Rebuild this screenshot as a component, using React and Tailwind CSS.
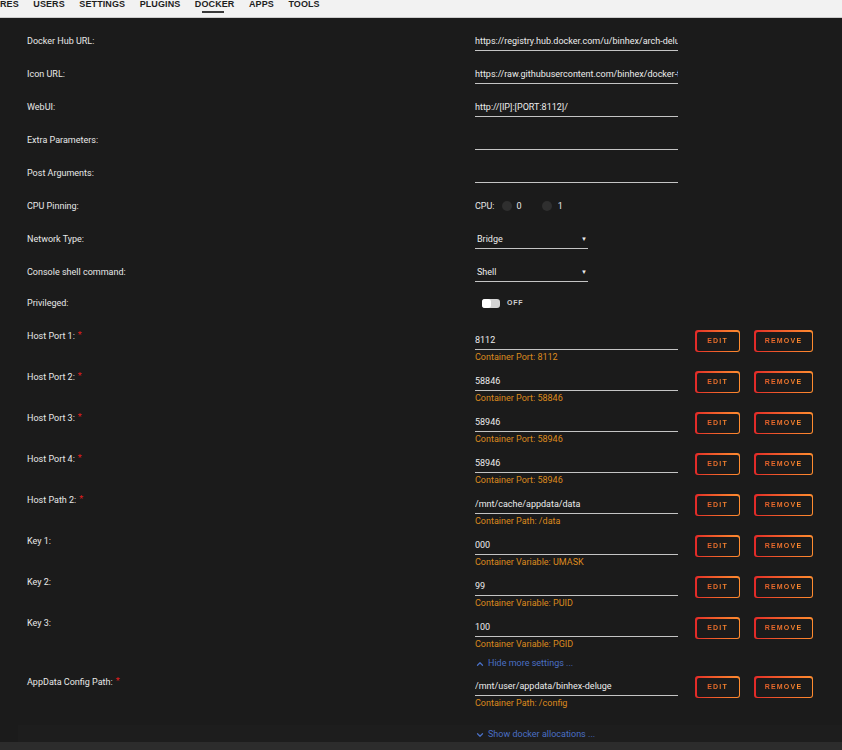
import { ChevronUp, ChevronDown } from 'lucide-react';

const navItems = ['RES', 'USERS', 'SETTINGS', 'PLUGINS', 'DOCKER', 'APPS', 'TOOLS'];

const portRows = [
  { label: 'Host Port 1:', value: '8112', sub: 'Container Port: 8112', req: true },
  { label: 'Host Port 2:', value: '58846', sub: 'Container Port: 58846', req: true },
  { label: 'Host Port 3:', value: '58946', sub: 'Container Port: 58946', req: true },
  { label: 'Host Port 4:', value: '58946', sub: 'Container Port: 58946', req: true },
  { label: 'Host Path 2:', value: '/mnt/cache/appdata/data', sub: 'Container Path: /data', req: true },
  { label: 'Key 1:', value: '000', sub: 'Container Variable: UMASK' },
  { label: 'Key 2:', value: '99', sub: 'Container Variable: PUID' },
  { label: 'Key 3:', value: '100', sub: 'Container Variable: PGID' },
];

const Label = ({ children, req }) => (
  <span>
    {children}
    {req && <span className="text-[#e11d1d] ml-[3px] relative top-[-1px]">*</span>}
  </span>
);

const TextInput = ({ value, width = 'w-[203px]' }) => (
  <div className={`${width} h-[19px] border-b border-[#c4c4c4] leading-[18px] overflow-hidden whitespace-nowrap text-[#ececec]`}>
    {value}
  </div>
);

const Row = ({ label, req, children }) => (
  <div className="flex h-[33px]">
    <div className="w-[448px] leading-[18px]">
      <Label req={req}>{label}</Label>
    </div>
    <div>{children}</div>
  </div>
);

const Select = ({ value }) => (
  <div className="w-[113px] h-[19px] border-b border-[#c4c4c4] leading-[18px] flex justify-between pl-[2px] pr-[1px] text-[#ececec]">
    <span>{value}</span>
    <span className="text-[6px]">▼</span>
  </div>
);

const GradButton = ({ children, width }) => (
  <div className={`${width} h-[22px] rounded-[3px] p-[1.5px] bg-gradient-to-r from-[#e22828] to-[#ff8c2f]`}>
    <div className="w-full h-full rounded-[2px] bg-[#1b1b1b] flex items-center justify-center">
      <span className="text-[7px] font-bold tracking-[1.2px] bg-gradient-to-r from-[#e8602a] to-[#ff8c2f] bg-clip-text text-transparent font-['Liberation_Sans',sans-serif]">
        {children}
      </span>
    </div>
  </div>
);

const PortRow = ({ label, value, sub, req }) => (
  <div className="flex h-[41px]">
    <div className="w-[448px] leading-[18px]">
      <Label req={req}>{label}</Label>
    </div>
    <div className="flex">
      <div className="pt-[4px]">
        <TextInput value={value} />
        <div className="leading-[14px] text-[#dc8a1e]">{sub}</div>
      </div>
      <div className="flex gap-[14px] ml-[17px] mt-[3px]">
        <GradButton width="w-[45px]">EDIT</GradButton>
        <GradButton width="w-[59px]">REMOVE</GradButton>
      </div>
    </div>
  </div>
);

export default function App() {
  return (
    <div className="w-[842px] h-[750px] overflow-hidden bg-[#1b1b1b] text-[9px] text-[#e8e8e8] font-['Roboto',sans-serif]">
      {/* top menu */}
      <nav className="h-[18px] bg-[#f2f2f2] border-b border-[#cdcdcd] flex gap-[14.5px] font-['Liberation_Sans',sans-serif] font-bold text-[9px] tracking-[0.1px] text-[#1e1e1e] leading-[10px]">
        {navItems.map((item) => (
          <div key={item} className="relative -mt-[1px]">
            {item}
            {item === 'DOCKER' && (
              <div className="absolute left-[7px] top-[12px] w-[22px] h-[2px] bg-[#3a3a3a]" />
            )}
          </div>
        ))}
      </nav>

      <div className="pl-[27px] pt-[14px]">
        <Row label="Docker Hub URL:">
          <TextInput value="https://registry.hub.docker.com/u/binhex/arch-deluge/" />
        </Row>
        <Row label="Icon URL:">
          <TextInput value="https://raw.githubusercontent.com/binhex/docker-templates/master/binhex/images/deluge-icon.png" />
        </Row>
        <Row label="WebUI:">
          <TextInput value="http://[IP]:[PORT:8112]/" />
        </Row>
        <Row label="Extra Parameters:">
          <TextInput value="" />
        </Row>
        <Row label="Post Arguments:">
          <TextInput value="" />
        </Row>
        <Row label="CPU Pinning:">
          <div className="flex items-center h-[18px] leading-[18px]">
            <span>CPU:</span>
            <span className="w-[10px] h-[10px] rounded-full bg-[#2f2f2f] ml-[7px]" />
            <span className="ml-[5px]">0</span>
            <span className="w-[10px] h-[10px] rounded-full bg-[#2f2f2f] ml-[20px]" />
            <span className="ml-[6px]">1</span>
          </div>
        </Row>
        <Row label="Network Type:">
          <Select value="Bridge" />
        </Row>
        <Row label="Console shell command:">
          <Select value="Shell" />
        </Row>
        <div className="flex h-[31px]">
          <div className="w-[448px] leading-[14px]">Privileged:</div>
          <div className="flex items-center h-[14px] pl-[7px]">
            <div className="w-[18px] h-[9px] rounded-[3px] bg-[#d4d4d4] flex">
              <div className="w-[9px] h-[9px] rounded-[3px] bg-white" />
            </div>
            <span className="ml-[7px] text-[7px] font-bold tracking-[0.8px] text-[#cfcfcf] font-['Liberation_Sans',sans-serif]">OFF</span>
          </div>
        </div>

        {portRows.map((r) => (
          <PortRow key={r.label} {...r} />
        ))}

        <div className="h-[18px] ml-[448px] flex items-center gap-[3px] text-[#4a6fc4]">
          <ChevronUp size={10} strokeWidth={3} />
          <span>Hide more settings ...</span>
        </div>

        <PortRow label="AppData Config Path:" value="/mnt/user/appdata/binhex-deluge" sub="Container Path: /config" req />
      </div>

      <div className="h-[11px]" />
      <div className="ml-[18px] h-[17px] bg-[#1d1d1d] pl-[457px] pt-[2px]">
        <div className="flex items-center gap-[3px] h-[15px] text-[#4a6fc4]">
          <ChevronDown size={10} strokeWidth={3} />
          <span>Show docker allocations ...</span>
        </div>
      </div>
      <div className="h-[8px] bg-[#2c2c2c]" />
    </div>
  );
}
